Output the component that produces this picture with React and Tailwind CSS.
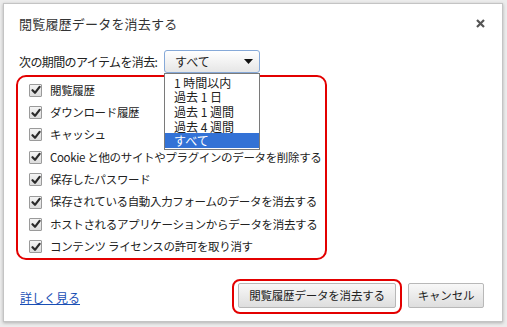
import React from "react";

const items = [
  "閲覧履歴",
  "ダウンロード履歴",
  "キャッシュ",
  "Cookie と他のサイトやプラグインのデータを削除する",
  "保存したパスワード",
  "保存されている自動入力フォームのデータを消去する",
  "ホストされるアプリケーションからデータを消去する",
  "コンテンツ ライセンスの許可を取り消す",
];

const options = ["1 時間以内", "過去 1 日", "過去 1 週間", "過去 4 週間", "すべて"];

function Check() {
  return (
    <span className="w-[13px] h-[13px] shrink-0 border border-[#9a9a9a] rounded-[1px] bg-gradient-to-b from-[#f4f4f4] to-[#dcdcdc] flex items-center justify-center">
      <svg width="10" height="10" viewBox="0 0 10 10">
        <path d="M1.5 5.2 L4 7.8 L8.6 1.8" fill="none" stroke="#2a2a2a" strokeWidth="2.2" strokeLinecap="round" strokeLinejoin="round" />
      </svg>
    </span>
  );
}

export default function App() {
  return (
    <div
      className="w-[507px] h-[327px] bg-[#ececec] pt-[3px] pl-[3px] overflow-hidden"
      style={{ fontFamily: '"Noto Sans CJK JP", "Noto Sans", sans-serif' }}
    >
      <div className="w-[500px] h-[319px] bg-white border border-[#c4c4c4] shadow-[0_1px_3px_rgba(0,0,0,0.25)] flex flex-col px-[15px] text-[#222]">
        <div className="h-[39px] flex items-center justify-between pr-[2px]">
          <span className="text-[13px] tracking-[0.2px] text-[#333]">閲覧履歴データを消去する</span>
          <svg width="9" height="9" viewBox="0 0 9 9">
            <path d="M1 1 L8 8 M8 1 L1 8" stroke="#555" strokeWidth="2.2" />
          </svg>
        </div>
        <div className="mt-[7px] h-[23px] flex items-center relative z-10">
          <span className="w-[145px] text-[12px] tracking-[-0.6px]">次の期間のアイテムを消去:</span>
          <div className="relative">
            <div className="w-[96px] h-[23px] border border-[#86a9d8] rounded-[3px] bg-gradient-to-b from-white to-[#e6e6e6] flex items-center justify-between pl-[10px] pr-[6px] text-[12px]">
              <span>すべて</span>
              <svg width="9" height="5" viewBox="0 0 9 5">
                <path d="M0 0 L9 0 L4.5 5 Z" fill="#111" />
              </svg>
            </div>
            <div className="absolute left-0 top-full w-[96px] h-[77px] bg-white border border-[#7a7a7a] py-[1px] flex flex-col">
              {options.map((o, i) => (
                <div
                  key={o}
                  className={
                    "h-[15px] flex items-center pl-[9px] text-[12px] leading-[15px] overflow-hidden " +
                    (i === 4 ? "bg-[#3372d6] text-white" : "text-[#222]")
                  }
                >
                  {o}
                </div>
              ))}
            </div>
          </div>
        </div>
        <div className="mt-[2px] -ml-[3px] w-[311px] h-[185px] border-2 border-[#e30000] rounded-[10px] pt-[2px] pl-[11px] flex flex-col">
          {items.map((t) => (
            <div key={t} className="h-[22.7px] flex items-center gap-[8px] text-[11.5px] tracking-[-0.35px]">
              <Check />
              <span className="whitespace-nowrap">{t}</span>
            </div>
          ))}
        </div>
        <div className="mt-[19px] flex items-center justify-between pr-[3px]">
          <span className="ml-[1px] mt-[2px] text-[12px] text-[#1a4fb5] underline">詳しく見る</span>
          <div className="flex items-center gap-[6px]">
            <div className="border-2 border-[#e30000] rounded-[8px] pt-[2px] pb-[4px] px-[4px]">
              <div className="w-[158px] h-[25px] border border-[#b8b8b8] rounded-[2px] bg-gradient-to-b from-[#f8f8f8] to-[#dedede] flex items-center justify-center text-[11.5px] tracking-[-0.2px]">
                閲覧履歴データを消去する
              </div>
            </div>
            <div className="w-[76px] h-[25px] -mt-[2px] border border-[#b8b8b8] rounded-[2px] bg-gradient-to-b from-[#f8f8f8] to-[#dedede] flex items-center justify-center text-[11.5px] tracking-[-0.2px]">
              キャンセル
            </div>
          </div>
        </div>
      </div>
    </div>
  );
}
